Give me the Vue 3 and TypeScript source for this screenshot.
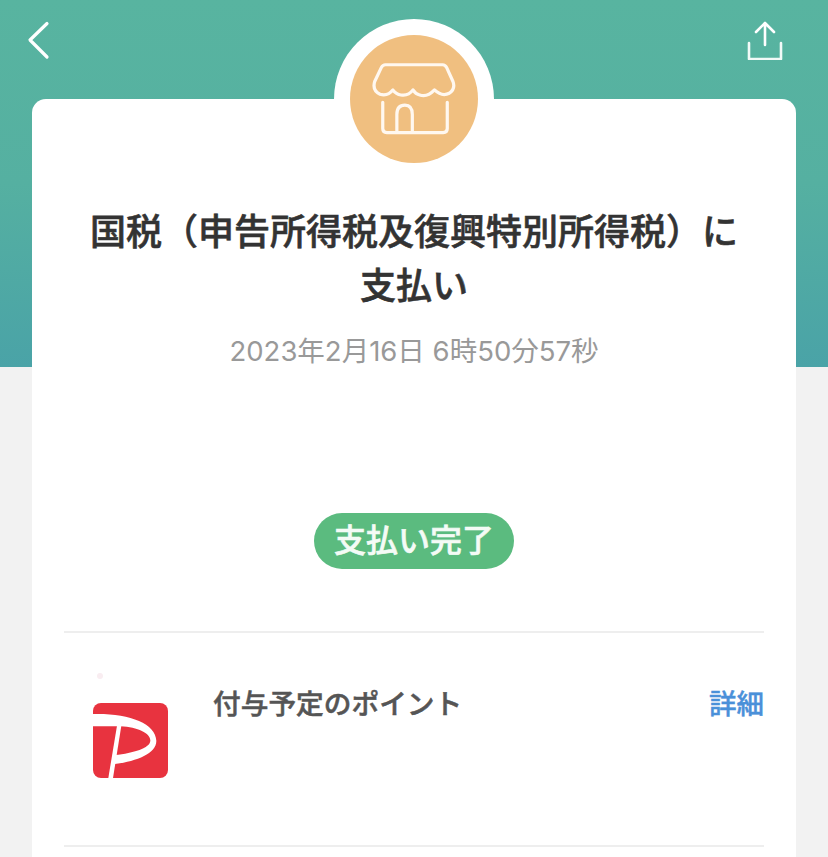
<template>
  <div class="page">
    <header class="hero">
      <button class="icon-btn" type="button" aria-label="戻る">
        <svg width="24" height="40" viewBox="0 0 24 40" fill="none">
          <path d="M20 3.5 L3 20 L20 37" stroke="#fff" stroke-width="3.2" stroke-linecap="round" stroke-linejoin="round" />
        </svg>
      </button>
      <button class="icon-btn" type="button" aria-label="共有">
        <svg width="38" height="40" viewBox="0 0 38 40" fill="none">
          <path d="M19 25 V3 M10 12 L19 3 L28 12" stroke="#fff" stroke-width="2.6" stroke-linecap="round" stroke-linejoin="round" />
          <path d="M3 23 V39 H35 V23" stroke="#f2faf8" stroke-width="2.6" stroke-linecap="round" stroke-linejoin="round" />
        </svg>
      </button>
    </header>

    <main class="card">
      <div class="shop-ring">
        <div class="shop-icon">
          <svg width="84" height="72" viewBox="128 146 250 212" fill="none">
            <path
              d="M168 150 H338 Q346 150 350 158 L369 200 Q377 222 358 235 Q336 246 314 225 Q292 248 270 240 Q258 238 250 225 Q236 244 214 240 Q200 238 190 225 Q176 244 152 238 Q128 226 136 200 L156 158 Q160 150 168 150 Z"
              stroke="#fff8f0"
              stroke-width="9.5"
              stroke-linejoin="round"
            />
            <path
              d="M160 262 V340 Q160 352 172 352 H340 Q352 352 352 340 V262 M202 350 V298 Q202 270 226 270 Q248 270 248 298 V350"
              stroke="#fff8f0"
              stroke-width="9.5"
              stroke-linecap="round"
            />
          </svg>
        </div>
      </div>

      <h1 class="title">{{ title }}</h1>
      <p class="date">{{ paidAt }}</p>

      <div class="status-wrap">
        <span class="status">支払い完了</span>
      </div>

      <section class="row">
        <div class="logo-box">
          <span class="logo-speck" />
          <svg width="75" height="75" viewBox="0 0 225 225">
            <defs>
              <clipPath id="logo-clip">
                <rect width="225" height="225" rx="24" />
              </clipPath>
            </defs>
            <g clip-path="url(#logo-clip)">
              <rect width="225" height="225" fill="#e8333f" />
              <path
                d="M0 33 C105 30 188 60 190 113 C191 152 128 176 60 184 L66 156 C122 150 171 135 172 113 C173 92 135 72 83 70 L0 70 Z"
                fill="#fff"
              />
              <path d="M72 68 L85 68 L60 225 L46 225 Z" fill="#fff" />
            </g>
          </svg>
        </div>
        <div class="row-label">付与予定のポイント</div>
        <a class="row-link">詳細</a>
      </section>

      <div class="divider" />
    </main>
  </div>
</template>

<script setup lang="ts">
const title = '国税（申告所得税及復興特別所得税）に支払い'
const paidAt = '2023年2月16日 6時50分57秒'
</script>

<style>
html,
body {
  margin: 0;
  background: #f2f2f2;
}
</style>

<style scoped>
.page {
  width: 828px;
  height: 857px;
  overflow: hidden;
  background: #f2f2f2;
  font-family: "Noto Sans CJK JP", "Liberation Sans", sans-serif;
}

.hero {
  height: 367px;
  box-sizing: border-box;
  padding: 20px 44px 0 27px;
  display: flex;
  justify-content: space-between;
  align-items: flex-start;
  background: linear-gradient(180deg, #58b4a0 0%, #55b0a1 50%, #4aa3a7 100%);
}

.icon-btn {
  padding: 0;
  border: 0;
  background: none;
  display: block;
  line-height: 0;
}

.card {
  position: relative;
  margin: -268px 32px 0;
  padding: 103px 32px 0;
  min-height: 900px;
  background: #fff;
  border-radius: 14px;
}

.shop-ring {
  position: absolute;
  top: -80px;
  left: 302px;
  width: 160px;
  height: 160px;
  box-sizing: border-box;
  padding: 16px;
  border-radius: 50%;
  background: #fff;
}

.shop-icon {
  width: 128px;
  height: 128px;
  border-radius: 50%;
  background: #f0bf80;
  display: flex;
  align-items: center;
  justify-content: center;
}

.title {
  margin: 0;
  padding: 0 18px;
  font-size: 36px;
  line-height: 54px;
  font-weight: 500;
  -webkit-text-stroke: 0.6px #333;
  color: #333;
  text-align: center;
}

.date {
  margin: 21px 0 0;
  font-family: Inter, "Noto Sans CJK JP", sans-serif;
  font-size: 27.5px;
  line-height: 40px;
  color: #999;
  text-align: center;
}

.status-wrap {
  margin-top: 142px;
  display: flex;
  justify-content: center;
}

.status {
  width: 200px;
  height: 56px;
  border-radius: 28px;
  background: #5bbb7f;
  color: #f4fbf6;
  font-size: 32px;
  line-height: 51px;
  font-weight: 500;
  -webkit-text-stroke: 0.6px #f4fbf6;
  text-align: center;
}

.row {
  margin-top: 62px;
  height: 214px;
  border-top: 2px solid #eee;
  box-sizing: border-box;
  display: flex;
  align-items: flex-start;
}

.logo-box {
  position: relative;
  margin: 70px 0 0 29px;
  line-height: 0;
}

.logo-speck {
  position: absolute;
  top: -30px;
  left: 4px;
  width: 6px;
  height: 6px;
  border-radius: 50%;
  background: #f9edf1;
}

.row-label {
  margin: 49px 0 0 45px;
  font-size: 27.7px;
  line-height: 40px;
  font-weight: 500;
  -webkit-text-stroke: 0.5px #555;
  color: #555;
}

.row-link {
  margin: 49px 0 0 auto;
  font-size: 27.5px;
  line-height: 40px;
  font-weight: 500;
  -webkit-text-stroke: 0.4px #4a90d9;
  color: #4a90d9;
}

.divider {
  height: 2px;
  background: #eee;
}
</style>
